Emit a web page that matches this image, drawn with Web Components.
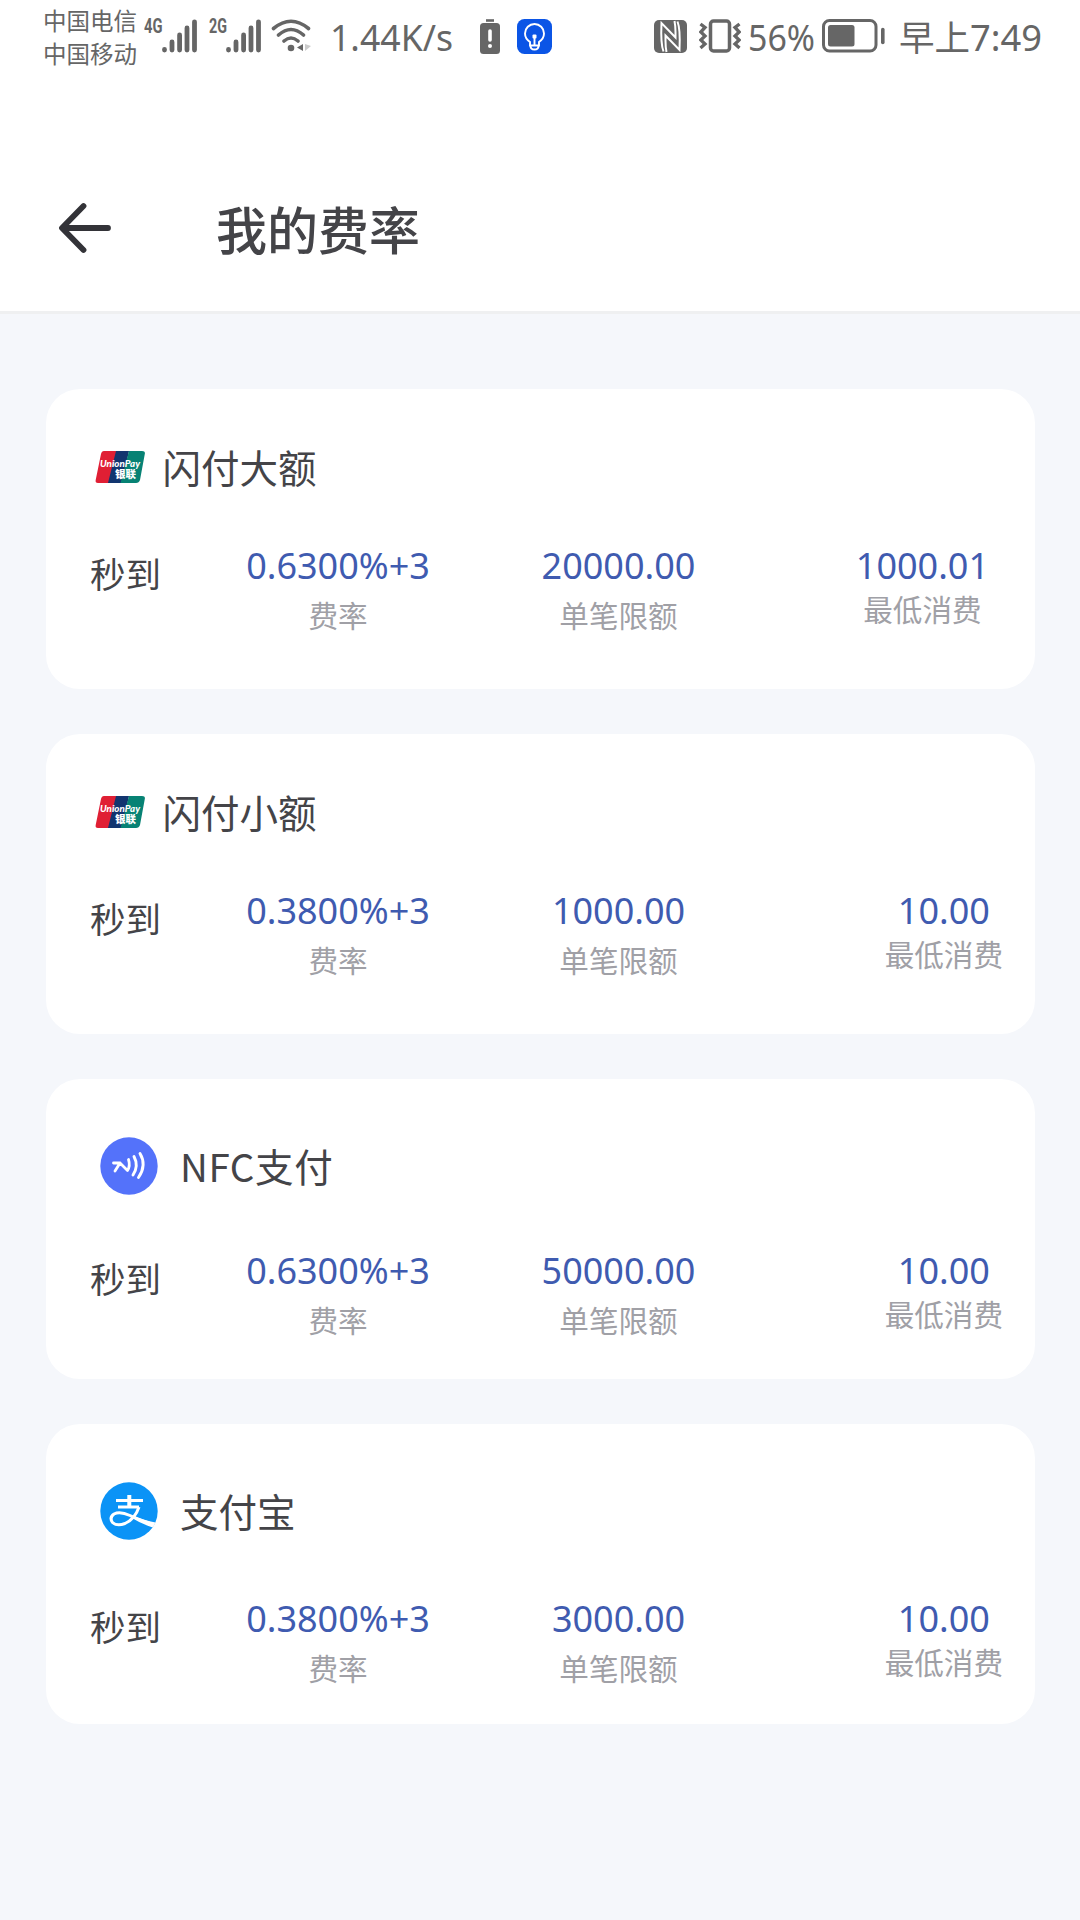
<!DOCTYPE html>
<html lang="zh-CN">
<head>
<meta charset="utf-8">
<title>我的费率</title>
<style>
html,body{margin:0;padding:0;background:#f5f7fb}
body{width:1080px;height:1920px;overflow:hidden;font-family:"Noto Sans CJK SC",sans-serif;color:#444448}
</style>
</head>
<body>
<rate-page></rate-page>
<script>
const define=(name,html,setup)=>customElements.define(name,class extends HTMLElement{
  connectedCallback(){
    if(this.shadowRoot)return;
    const t=document.createElement('template');
    t.innerHTML=typeof html==='function'?html(this):html;
    this.attachShadow({mode:'open'}).append(t.content.cloneNode(true));
    if(setup)setup(this);
  }
});

/* Text squeezed or stretched to an exact width */
define('fit-text',`<style>
:host{display:block;flex:none;white-space:nowrap}
span{display:inline-block;transform-origin:0 50%}
</style><span><slot></slot></span>`,el=>{
  const s=el.shadowRoot.querySelector('span'),w=+el.getAttribute('w');
  el.style.width=w+'px';
  s.style.transform=`scaleX(${w/s.getBoundingClientRect().width})`;
});

define('signal-bars',`<style>:host{display:block;width:36px;height:34px;flex:none}svg{display:block}</style>
<svg width="36" height="34" viewBox="0 0 36 34" stroke="#666" stroke-width="4.8" stroke-linecap="round">
<path d="M2.5 30.500v.6M10 23v8M17.600 16v15M25 9v22M32.500 2.800v28.200"/></svg>`);

define('status-icon',el=>({
wifi:`<svg width="42" height="34" viewBox="0 0 42 34" fill="none" stroke="#666" stroke-width="3.600" stroke-linecap="round"><path d="M2.500 9.500Q20 -5 37.500 9.500M7.500 16Q20 5 32.500 16M13 22Q20 16 27 22"/><circle cx="20" cy="29" r="3.300" fill="#666" stroke="none"/><path d="M32 25v7l-6-3.500z" fill="#666" stroke="none"/><path d="M34 25v7l6-5z" fill="#ccc" stroke="none"/></svg>`,
alert:`<svg width="20" height="35" viewBox="0 0 20 35"><path d="M6 1.500h8" stroke="#666" stroke-width="2.600"/><rect x="0" y="4" width="20" height="31" rx="3.500" fill="#666"/><path d="M10 12v9" stroke="#fff" stroke-width="3.600" stroke-linecap="round"/><circle cx="10" cy="27" r="2" fill="#fff"/></svg>`,
bulb:`<svg width="35" height="35" viewBox="0 0 35 35" fill="none" stroke="#fff" stroke-width="1.900"><rect width="35" height="35" rx="7.500" fill="#0b55e6" stroke="none"/><path d="M13 26.500v-3.500Q8 19.500 8 14.500a9.500 9.500 0 0 1 19 0q0 5-5 8.500v3.500zM13.500 27q0 3.500 4 3.500t4-3.500M17.500 26v-8"/><rect x="15.500" y="15.500" width="4" height="4" rx="1" fill="#fff" stroke="none"/></svg>`,
nfc:`<svg width="33" height="33" viewBox="0 0 33 33"><rect width="33" height="33" rx="5" fill="#666"/><path d="M9.500 31.500Q6.500 24 7.500 3L21.500 17.500V12Q21.500 6 20.500 1M23.500 1.500Q26.500 9 25.500 30L11.500 15.500V21Q11.500 27 12.500 32" fill="none" stroke="#fff" stroke-width="2"/></svg>`,
vibrate:`<svg width="42" height="34" viewBox="0 0 42 34" fill="none" stroke="#666" stroke-width="3.500"><rect x="11.500" y="2" width="19" height="30" rx="3"/><path d="M1.500 5L6 8.500L1.800 13L6 17L1.800 21L6 25L1.500 29M40.500 5L36 8.500L40.200 13L36 17L40.200 21L36 25L40.500 29" stroke-width="3.300"/></svg>`,
battery:`<svg width="63" height="34" viewBox="0 0 63 34"><rect x="1.500" y="1.500" width="52.500" height="30.500" rx="6" fill="none" stroke="#666" stroke-width="3"/><rect x="6" y="6" width="26.500" height="21.500" rx="2.500" fill="#666"/><path d="M60.800 10.500v13" stroke="#666" stroke-width="3.600" stroke-linecap="round"/></svg>`
}[el.getAttribute('name')]+`<style>:host{display:block;flex:none}svg{display:block}</style>`));

define('status-bar',`<style>
:host{display:flex;align-items:flex-start;height:80px;box-sizing:border-box;padding-left:43px;color:#666}
.ops{width:95px;padding-top:4px;font-size:23.500px;line-height:33px}
.gen{font:700 21px/21px "Roboto",sans-serif;margin:16px 0 0 6px}
.n{font:36.500px/42px "Noto Sans",sans-serif;margin-top:16px}
.cjk{font:35.500px/42px "Noto Sans CJK SC",sans-serif}
</style>
<div class="ops"><fit-text w="94">中国电信</fit-text><fit-text w="94">中国移动</fit-text></div>
<fit-text class="gen" w="18.500">4G</fit-text><signal-bars style="margin:19px 0 0 -1px"></signal-bars>
<fit-text class="gen" w="18" style="margin-left:11px">2G</fit-text><signal-bars style="margin:19px 0 0 -1px"></signal-bars>
<status-icon name="wifi" style="margin:19px 0 0 9px"></status-icon>
<fit-text class="n" w="123" style="margin-left:17px">1.44K/s</fit-text>
<status-icon name="alert" style="margin:19px 0 0 27px"></status-icon>
<status-icon name="bulb" style="margin:19px 0 0 17px"></status-icon>
<status-icon name="nfc" style="margin:20px 0 0 102px"></status-icon>
<status-icon name="vibrate" style="margin:19px 0 0 12px"></status-icon>
<fit-text class="n" w="67" style="margin-left:7px">56%</fit-text>
<status-icon name="battery" style="margin:19px 0 0 7px"></status-icon>
<fit-text class="n cjk" w="71" style="margin:15px 0 0 14px">早上</fit-text>
<fit-text class="n" w="72">7:49</fit-text>`);

define('page-header',`<style>
:host{display:flex;align-items:center;height:234px;box-sizing:border-box;padding:68px 0 0 58px;border-bottom:3px solid #eff0f1;background:#fff}
svg{display:block;flex:none;margin-top:-4px}
h1{margin:-4px 0 0 102px;font:500 51px/60px "Noto Sans CJK SC",sans-serif;color:#444448;white-space:nowrap}
</style>
<svg width="56" height="54" viewBox="0 0 56 54" fill="none" stroke="#333338" stroke-width="5.800" stroke-linecap="round" stroke-linejoin="round"><path d="M25.500 5L4 27L25.500 49M5 27H50"/></svg>
<h1><slot></slot></h1>`);

define('pay-logo',el=>`<style>:host{display:block;flex:none}svg{display:block}</style>`+({
union:`<svg width="50" height="32" viewBox="0 0 50 32"><path d="M9 0H22L14 32H3Q0 32 .7 29L6 3Q6.700 0 9 0z" fill="#e01f34"/><path d="M21 0H34L27 32H13z" fill="#12356f"/><path d="M34 0H47Q50.500 0 49.800 3L45 29Q44 32 41 32H25.500z" fill="#078274"/><g fill="#fff" font-weight="900"><text x="5" y="16" font-family="Lato" font-style="italic" font-size="10" textLength="40" lengthAdjust="spacingAndGlyphs">UnionPay</text><text x="20" y="26.500" font-family="Noto Sans CJK SC" font-size="10.500" textLength="21">银联</text></g></svg>`,
nfc:`<svg width="58" height="58" viewBox="0 0 58 58" fill="none" stroke="#fff" stroke-linecap="round" stroke-linejoin="round"><circle cx="29" cy="29" r="28.700" fill="#5472fa" stroke="none"/><path d="M13.500 26H20L15 34M20 26L27.500 33.500Q30.500 29 28.500 22.500" stroke-width="2.800"/><path d="M34 19.500Q39 29 33 38M40 16.500Q47 28 38.500 40.500" stroke-width="2.900"/></svg>`,
ali:`<svg width="58" height="58" viewBox="0 0 58 58" fill="none" stroke="#fff"><defs><clipPath id="c"><circle cx="29" cy="29" r="28.700"/></clipPath></defs><circle cx="29" cy="29" r="28.700" fill="#0b93f6" stroke="none"/><g clip-path="url(#c)"><path d="M16 18.500H43M18 25H39" stroke-width="2.800"/><path d="M29.300 13V25" stroke-width="4"/><path d="M39 25Q35 37 25 41.500Q17 44.500 12.500 40.500Q9 35.500 14 32Q20 29 30 33.500T58 44" stroke-width="3"/><path d="M32 33.500Q43 38 58 41v6Q44 43.500 31 35.500z" fill="#fff" stroke="none"/></g></svg>`
}[el.getAttribute('name')]));

/* One figure above its caption */
define('rate-stat',el=>`<style>
:host{display:flex;flex-direction:column;align-items:center;white-space:nowrap}
b{font:400 36px/44px "Noto Sans",sans-serif;color:#3f5bb0}
small{font:29.600px/40px "Noto Sans CJK SC",sans-serif;color:#a0a0a6;margin-top:var(--cap,7px)}
</style><b>${el.getAttribute('value')}</b><small><slot></slot></small>`);

define('rate-card',el=>{
const a=n=>el.getAttribute(n),union=a('logo')==='union';
return `<style>
:host{display:flex;flex-direction:column;height:300px;box-sizing:border-box;border-radius:34px;background:#fff;padding-top:${union?54:63}px}
header{display:flex;align-items:center;height:48px;gap:${union?19:23}px;padding-left:${union?48.5:54}px;font:38.500px/48px "Noto Sans CJK SC",sans-serif;white-space:nowrap}
h2{font:inherit;margin:-3px 0 0 -1px;letter-spacing:${a('logo')==='nfc'?.6:0}px}
.row{display:grid;grid-template-columns:152px 280px 281px 1fr;margin-top:${a('gap')}px}
.now{font:35.500px/48px "Noto Sans CJK SC",sans-serif;padding:5px 0 0 44px}
.last{justify-self:end;padding-right:${a('end')}px;--cap:1px}
</style>
<header><pay-logo name="${a('logo')}"></pay-logo><h2><slot></slot></h2></header>
<div class="row"><div class="now">秒到</div>
<rate-stat value="${a('rate')}">费率</rate-stat>
<rate-stat value="${a('limit')}">单笔限额</rate-stat>
<rate-stat class="last" value="${a('min')}">最低消费</rate-stat></div>`});

define('rate-page',`<style>
:host{display:flex;flex-direction:column;width:1080px;height:1920px;background:#f5f7fb}
status-bar{background:#fff}
main{display:flex;flex-direction:column;gap:45px;padding:75px 45px 0 46px}
</style>
<status-bar></status-bar>
<page-header>我的费率</page-header>
<main>
<rate-card logo="union" rate="0.6300%+3" limit="20000.00" min="1000.01" gap="52.5" end="46">闪付大额</rate-card>
<rate-card logo="union" rate="0.3800%+3" limit="1000.00" min="10.00" gap="52.5" end="32">闪付小额</rate-card>
<rate-card logo="nfc" rate="0.6300%+3" limit="50000.00" min="10.00" gap="58.5" end="32">NFC支付</rate-card>
<rate-card logo="ali" rate="0.3800%+3" limit="3000.00" min="10.00" gap="61.5" end="32">支付宝</rate-card>
</main>`);
</script>
</body>
</html>
